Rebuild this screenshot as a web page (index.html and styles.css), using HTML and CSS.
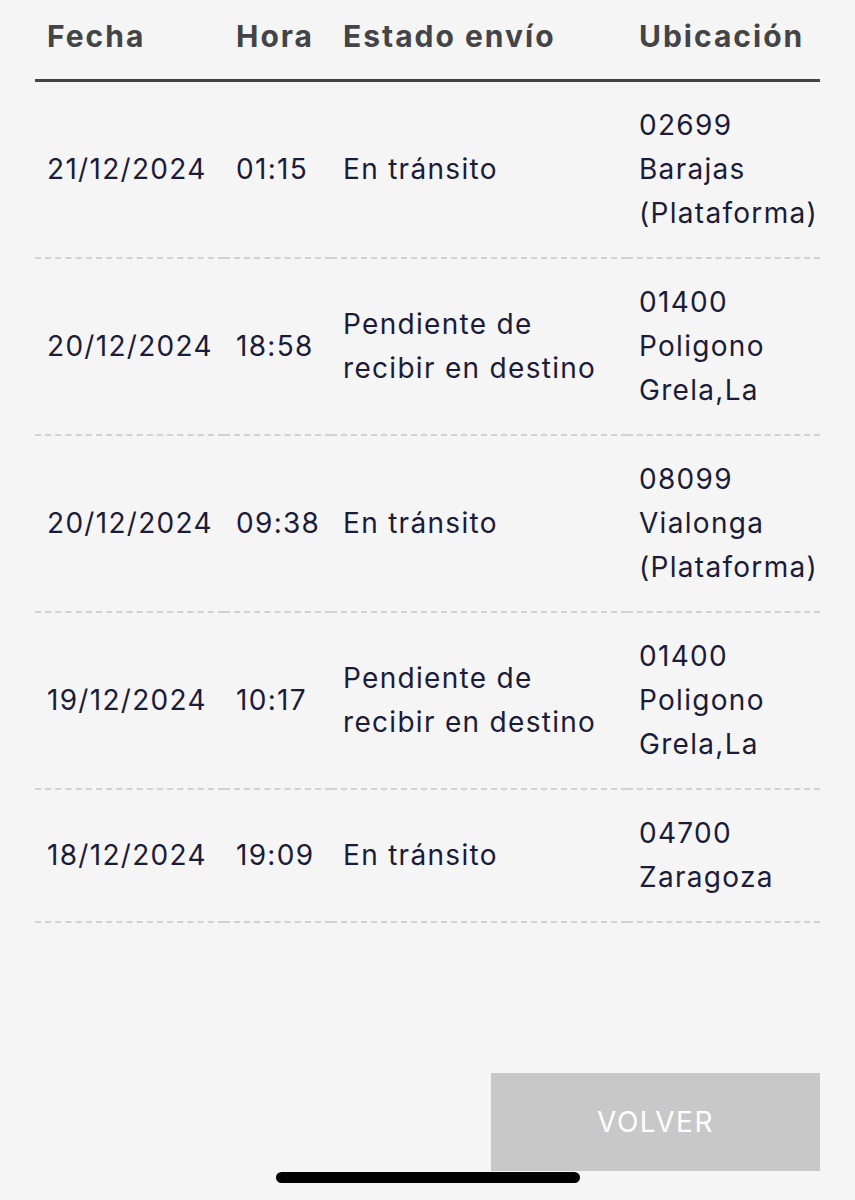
FILE: index.html
```html
<!DOCTYPE html>
<html lang="es">
<head>
<meta charset="utf-8">
<link rel="stylesheet" href="styles.css">
</head>
<body>
<div class="page">
  <table class="track">
    <colgroup>
      <col class="c-fecha"><col class="c-hora"><col class="c-estado"><col class="c-ubic">
    </colgroup>
    <thead>
      <tr><th>Fecha</th><th>Hora</th><th>Estado envío</th><th>Ubicación</th></tr>
    </thead>
    <tbody>
      <tr><td>21/12/2024</td><td>01:15</td><td>En tránsito</td><td>02699<br>Barajas<br>(Plataforma)</td></tr>
      <tr><td>20/12/2024</td><td>18:58</td><td>Pendiente de<br>recibir en destino</td><td>01400<br>Poligono<br>Grela,La</td></tr>
      <tr><td>20/12/2024</td><td>09:38</td><td>En tránsito</td><td>08099<br>Vialonga<br>(Plataforma)</td></tr>
      <tr><td>19/12/2024</td><td>10:17</td><td>Pendiente de<br>recibir en destino</td><td>01400<br>Poligono<br>Grela,La</td></tr>
      <tr><td>18/12/2024</td><td>19:09</td><td>En tránsito</td><td>04700<br>Zaragoza</td></tr>
    </tbody>
  </table>
  <div class="actions">
    <button class="btn-back">VOLVER</button>
  </div>
  <div class="home-indicator"></div>
</div>
</body>
</html>
```

FILE: styles.css
```css
html, body {
  margin: 0;
  padding: 0;
  background: #f5f5f5;
}
body {
  font-family: Inter, "Noto Sans", sans-serif;
  color: #1c1b38;
}
.page {
  position: relative;
  width: 855px;
  height: 1200px;
  padding: 0 35px;
  box-sizing: border-box;
}
.track {
  width: 785px;
  border-collapse: collapse;
  table-layout: fixed;
}
.c-fecha { width: 189px; }
.c-hora { width: 107px; }
.c-estado { width: 296px; }
.c-ubic { width: 193px; }
.track th {
  text-align: left;
  font-weight: 700;
  font-size: 30px;
  letter-spacing: 2px;
  color: #444447;
  height: 80px;
  padding: 0 0 6px 12px;
  box-sizing: border-box;
  border-bottom: 3px solid #444447;
  white-space: nowrap;
}
.track td {
  font-size: 28px;
  letter-spacing: 1.3px;
  line-height: 44px;
  padding: 21px 0 22px 12px;
  vertical-align: middle;
  white-space: nowrap;
  border-bottom: 2px dashed #d2d2d2;
}
.actions {
  display: flex;
  justify-content: flex-end;
  margin-top: 150px;
}
.btn-back {
  width: 329px;
  height: 98px;
  border: none;
  background: #c8c8c8;
  color: #ffffff;
  font-family: Inter, "Noto Sans", sans-serif;
  font-size: 28px;
  letter-spacing: 1.5px;
  padding: 0;
}
.home-indicator {
  position: absolute;
  left: 276px;
  top: 1172px;
  width: 304px;
  height: 11px;
  border-radius: 6px;
  background: #000;
}
```
